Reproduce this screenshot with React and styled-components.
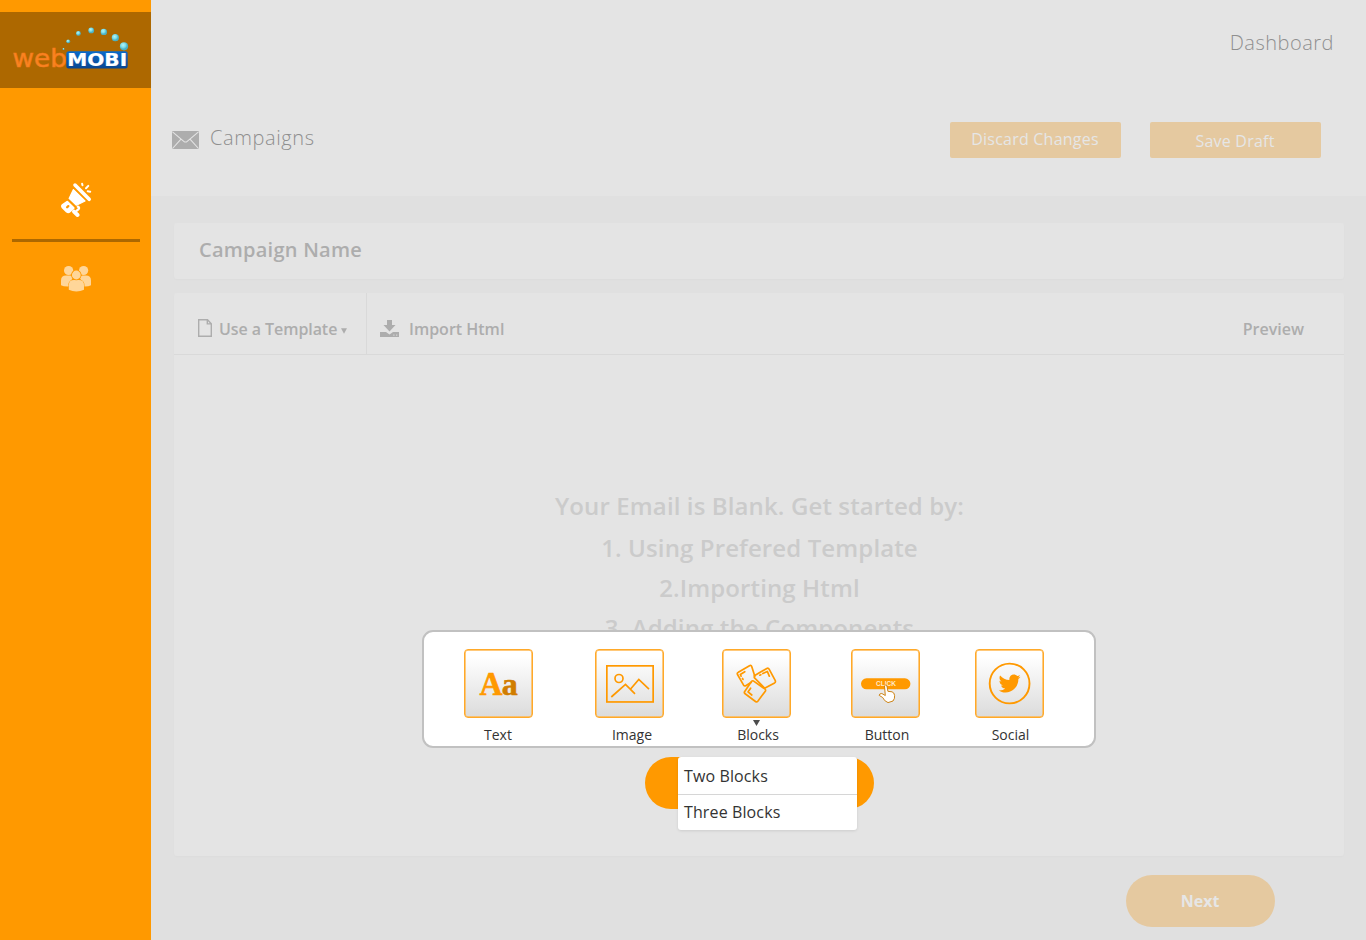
import React from "react";
import styled, { createGlobalStyle } from "styled-components";
import { FaTwitter } from "react-icons/fa";

const Global = createGlobalStyle`
  * { box-sizing: border-box; }
  body { margin: 0; font-family: "Open Sans", "Liberation Sans", sans-serif; background: #e0e0e0; overflow: hidden; }
  button { font: inherit; border: 0; padding: 0; cursor: pointer; }
  svg { display: block; flex: none; }
`;

const Page = styled.div`
  display: flex;
  position: relative;
  width: 1366px;
  height: 940px;
  overflow: hidden;
`;

const Sidebar = styled.aside`
  width: 151px;
  flex: none;
  padding-top: 12px;
  background: #ff9900;
  display: flex;
  flex-direction: column;
  align-items: center;
`;

const LogoBox = styled.div`
  width: 151px;
  height: 76px;
  background: #ad6800;
`;

const SideItem = styled.a`
  display: flex;
  width: 128px;
  justify-content: center;
  padding: ${(p) => p.$pad};
  border-bottom: ${(p) => (p.$active ? "3px solid #ad6800" : "0")};
`;

const Main = styled.main`
  flex: 1;
  display: flex;
  flex-direction: column;
  background: #e0e0e0;
`;

const Header = styled.header`
  height: 196px;
  background: #e4e4e4;
`;

const TopNav = styled.nav`
  height: 84px;
  display: flex;
  align-items: center;
  justify-content: flex-end;
  padding-right: 32px;
  font-size: 20px;
  font-weight: 300;
  letter-spacing: 0.5px;
  color: #8f8f8f;
`;

const TitleRow = styled.div`
  display: flex;
  align-items: flex-start;
  margin-top: 38px;
  padding: 0 45px 0 21px;
  height: 36px;
`;

const Title = styled.h1`
  margin: 2px auto 0 11px;
  font-size: 20px;
  line-height: 28px;
  font-weight: 300;
  letter-spacing: 0.6px;
  color: #8f8f8f;
`;

const ActionButton = styled.button`
  width: 171px;
  height: 36px;
  margin-left: ${(p) => p.$gap || 0}px;
  padding: ${(p) => p.$drop || 0}px 1px ${(p) => p.$lift || 0}px 0;
  border-radius: 2px;
  background: #e5c9a0;
  color: #e6e6e6;
  font-size: 16px;
  letter-spacing: 0.22px;
`;

const Content = styled.section`
  padding: 27px 22px 0 23px;
  display: flex;
  flex-direction: column;
`;

const Card = styled.div`
  background: #e4e4e4;
  border-radius: 3px;
  box-shadow: 0 1px 2px rgba(0, 0, 0, 0.02);
`;

const NameCard = styled(Card)`
  height: 56px;
  padding-left: 25px;
  line-height: 54px;
  font-size: 20px;
  font-weight: 600;
  letter-spacing: 0.24px;
  color: #adadad;
`;

const EditorCard = styled(Card)`
  height: 563px;
  margin-top: 14px;
`;

const EditorBar = styled.div`
  display: flex;
  height: 62px;
  border-bottom: 1px solid #d9d9d9;
  font-size: 16px;
  font-weight: 600;
  line-height: 22px;
  color: #adadad;
`;

const BarItem = styled.div`
  display: flex;
  align-items: flex-start;
  padding: 25px 0 0 ${(p) => p.$left || 0}px;
  width: ${(p) => p.$width || "auto"};
  border-right: ${(p) => (p.$divided ? "1px solid #d9d9d9" : "0")};
  margin-left: ${(p) => (p.$end ? "auto" : "0")};
  margin-right: ${(p) => (p.$end ? "40px" : "0")};
`;

const BarLabel = styled.span`
  margin-left: ${(p) => p.$gap || 0}px;
  letter-spacing: ${(p) => p.$track || 0}px;
  white-space: nowrap;
`;

const EmptyState = styled.div`
  display: flex;
  flex-direction: column;
  align-items: center;
  padding: 131px 0 0 1px;
  font-size: 24px;
  font-weight: 600;
  line-height: 40px;
  letter-spacing: 0.12px;
  color: #cbcbcb;
`;

const EmptyTitle = styled.div`
  margin-bottom: 2px;
`;

const Pill = styled.button`
  border-radius: 26px;
  height: 52px;
`;

const AddPill = styled(Pill)`
  width: 229px;
  margin-top: 109px;
  background: #ff9900;
`;

const NextPill = styled(Pill)`
  width: 149px;
  margin: 19px 69px 0 auto;
  padding-right: 1px;
  background: #e5c9a0;
  color: #e6e6e6;
  font-size: 16px;
  font-weight: 700;
`;

const Palette = styled.div`
  position: absolute;
  left: 422px;
  top: 630px;
  width: 674px;
  height: 118px;
  display: flex;
  padding: 17px 0 0 40px;
  background: #fff;
  border: 2px solid #c1c1c1;
  border-radius: 11px;
`;

const Tool = styled.div`
  width: 69px;
  margin-right: ${(p) => p.$after || 0}px;
  display: flex;
  flex-direction: column;
  align-items: center;
`;

const Tile = styled.div`
  width: 69px;
  height: 69px;
  border: 1px solid #ffa929;
  border-radius: 4px;
  background: linear-gradient(#ffffff 10%, #dbdbdb);
  box-shadow: inset 0 0 0 0.7px #ffb74d;
  display: flex;
  align-items: center;
  justify-content: center;
`;

const Caret = styled.div`
  height: 10px;
  padding-top: 2px;
`;

const ToolLabel = styled.span`
  font-size: 14px;
  line-height: 14px;
  color: #333;
  padding-left: ${(p) => p.$shift || 0}px;
  padding-right: ${(p) => p.$back || 0}px;
`;

const Menu = styled.ul`
  position: absolute;
  left: 678px;
  top: 757px;
  width: 179px;
  height: 73px;
  margin: 0;
  padding: 0;
  list-style: none;
  background: #fff;
  border-radius: 3px;
  box-shadow: 0 1px 3px rgba(0, 0, 0, 0.1);
`;

const MenuItem = styled.li`
  height: ${(p) => p.$h}px;
  padding-left: 6px;
  font-size: 16px;
  line-height: ${(p) => p.$lh}px;
  letter-spacing: 0.12px;
  color: #333;
  border-bottom: ${(p) => (p.$line ? "1px solid #d6d6d6" : "0")};
`;

function Logo() {
  const dots = [
    [63.5, 49, 1], [68.2, 41.3, 1.9], [78.4, 33.4, 2.4], [91.2, 30.4, 2.9],
    [103.8, 31.9, 3.2], [115.3, 37.7, 3.6], [124, 46.3, 4.1],
  ];
  return (
    <svg width="151" height="76" viewBox="0 12 151 76">
      <defs>
        <radialGradient id="dot" cx="40%" cy="35%">
          <stop offset="0" stopColor="#b6f4f5" />
          <stop offset="0.6" stopColor="#7cdde8" />
          <stop offset="1" stopColor="#4cb2c4" />
        </radialGradient>
        <linearGradient id="plate" x2="0" y2="1">
          <stop offset="0" stopColor="#0a6bcc" />
          <stop offset="1" stopColor="#0a4690" />
        </linearGradient>
      </defs>
      {dots.map(([x, y, r]) => (
        <circle key={x} cx={x} cy={y} r={r} fill="url(#dot)" />
      ))}
      <text x="12.5" y="66.5" fontFamily="DejaVu Sans" fontSize="25" textLength="54.5" lengthAdjust="spacingAndGlyphs" fill="#fb8420" stroke="#f47a1c" strokeWidth="0.6">web</text>
      <rect x="66.3" y="51.3" width="61.4" height="17.2" rx="2.5" fill="url(#plate)" />
      <text x="67.2" y="66.4" fontFamily="DejaVu Sans" fontWeight="700" fontSize="17.4" textLength="60" lengthAdjust="spacingAndGlyphs" fill="#fff" stroke="#fff" strokeWidth="0.2">MOBI</text>
    </svg>
  );
}

function Megaphone() {
  return (
    <svg width="32" height="36" viewBox="0 0 32 36" fill="none" stroke="#fff" strokeLinecap="round" strokeLinejoin="round">
      <path d="M15 3.1L29.2 17.3" strokeWidth="3.6" />
      <path d="M13.4 7.6L25 19L16.4 23.2L9.1 16.4Z" fill="#fff" strokeWidth="1.2" />
      <path d="M7.2 19.8L13.6 26L9.8 29.6Q8.2 31 6.6 29.6L2.6 25.6Q1.4 24.200 2.800 22.800Z" fill="#fff" strokeWidth="2" />
      <path d="M7.1 25.3L8.3 24.1" stroke="#ff9900" strokeWidth="2.300" />
      <path d="M14 29.6L17.600 33" strokeWidth="4" />
      <path d="M16.500 28.900L18.600 27.200Q19.800 25.400 17.800 24.600" strokeWidth="2.300" />
      <path d="M22.100 1.800L22.500 3.300M26 6.300L28.300 3.900M27.700 9.300L30.200 9.700" strokeWidth="2" />
    </svg>
  );
}

function People() {
  return (
    <svg width="32" height="27" viewBox="0 0 32 27" fill="#ffd699">
      <circle cx="8.6" cy="5.5" r="4.6" />
      <circle cx="23.6" cy="5.5" r="4.6" />
      <path d="M1 20.2V15.5Q1 10.6 6 10.6H10Q12 10.6 13 12.5L9 19V21.4Q3.500 21.600 1 20.200Z" />
      <path d="M31 20.200V15.500Q31 10.600 26 10.600H22.500Q20.500 10.600 19.500 12.500L23.500 19V21.400Q28.500 21.600 31 20.200Z" />
      <path d="M8.800 24.800V20.300Q8.800 15 14 15H18.800Q24 15 24 20.300V24.800Q20.500 26.400 16.400 26.400T8.800 24.800Z" stroke="#ff9900" strokeWidth="1" paintOrder="stroke" />
      <circle cx="16.300" cy="10" r="4.400" stroke="#ff9900" strokeWidth="1.600" paintOrder="stroke" />
    </svg>
  );
}

const EnvelopeSvg = styled.svg`
  margin-top: 9px;
`;

function Envelope() {
  return (
    <EnvelopeSvg width="27" height="18" viewBox="0 0 27 18">
      <rect width="27" height="18" rx="1" fill="#adadad" />
      <path d="M0.500 0.800L11.800 10.300Q13.500 11.800 15.200 10.300L26.500 0.800M0.500 17.500L9 8.200M26.500 17.500L18 8.200" fill="none" stroke="#e4e4e4" strokeWidth="1.100" />
    </EnvelopeSvg>
  );
}

const BarIcon = styled.svg`
  margin: ${(p) => p.$m};
`;

function PageIcon() {
  return (
    <BarIcon $m="1px 0 0" width="14" height="18" viewBox="0 0 14 18" fill="none" stroke="#adadad" strokeWidth="1.400">
      <path d="M0.700 0.700H9.500L13.300 4.700V17.300H0.700ZM9.300 0.900V4.900H13.200" />
    </BarIcon>
  );
}

function ImportIcon() {
  return (
    <BarIcon $m="2px 0 0" width="19" height="17" viewBox="0 0 19 17">
      <path d="M7 0H12V5H15.500L9.500 11.500L3.500 5H7Z" fill="#adadad" />
      <path d="M0 12H6L9.500 14.500L13 12H19V17H0Z" fill="#adadad" />
      <path d="M13.200 14.500H14.500V15.700H13.200ZM16 14.500H17.300V15.700H16Z" fill="#d4d4d4" />
    </BarIcon>
  );
}

function TextIcon() {
  return (
    <svg width="67" height="67" viewBox="0 0 67 67" fontFamily="Liberation Serif" fontWeight="700">
      <text x="14.500" y="45.200" fontSize="34" textLength="23" lengthAdjust="spacingAndGlyphs" fill="#ff9900" stroke="#ff9900" strokeWidth="0.600">A</text>
      <text x="36.800" y="45.200" fontSize="32" textLength="16" lengthAdjust="spacingAndGlyphs" fill="#d17d00" stroke="#d17d00" strokeWidth="0.600">a</text>
    </svg>
  );
}

function ImageIcon() {
  return (
    <svg width="48" height="38" viewBox="0 0 48 38" fill="none" stroke="#ff9900" strokeWidth="1.700">
      <rect x="0.850" y="0.850" width="46.300" height="36.100" />
      <circle cx="13" cy="13.500" r="4" />
      <path d="M5.300 32L19.500 19.300L29 28.800M24.600 24L32.800 14.500L43 24.200" />
    </svg>
  );
}

function BlocksIcon() {
  return (
    <svg width="42" height="40" viewBox="0.700 0.300 42 40" fill="none" stroke="#ff9900" strokeWidth="1.700" strokeLinejoin="round" strokeLinecap="round">
      <path d="M19.500 12.500L16.500 3Q15.800 1.200 14.200 2L3 8.500Q1.500 9.300 2.200 10.800L8.300 21.500Q9.200 22.700 10.500 22L16 18.500" />
      <path d="M5.800 12.500L5 10.800L9.500 8M7.200 14.800L7.700 15.700" />
      <path d="M19 12L31.500 4.700Q33 4 33.800 5.500L40 17Q40.500 18.300 39.300 19.200L29.300 24.500L19 14Z" />
      <path d="M27.500 9.800L32 7.700L34 12.500M24.500 11.500L25.500 11" />
      <path d="M18 17.200L29.500 25.200Q30.800 26.200 30 27.500L22.500 37.500Q21.500 38.700 20.200 37.800L9.800 30Q8.500 29 9.400 27.700L16 18Q17 16.700 18 17.200Z" />
      <path d="M15.300 24.500L12.700 28.200L16.500 31.300" />
    </svg>
  );
}

const ClickSvg = styled.svg`
  margin-top: 14px;
`;

function ClickIcon() {
  return (
    <ClickSvg width="50" height="28" viewBox="0 0 50 28">
      <rect x="0" y="1.300" width="49.400" height="11" rx="5.500" fill="#ff9900" />
      <text x="15" y="9.200" fontSize="6.500" fontFamily="Liberation Sans" fontWeight="700" fill="#ffe9c9" textLength="20" lengthAdjust="spacingAndGlyphs">CLICK</text>
      <path d="M23.500 9Q24.500 7.200 26 9L26.900 14.300L31 14.800Q33.300 15.500 33.600 18.500Q34 21.500 32 24L27 25.600Q23 24 21.700 20.500L18.200 18.400Q18.300 16.400 20.800 16.500L24.300 18.500Z" fill="#fff" stroke="#c87800" strokeWidth="0.900" strokeLinejoin="round" />
    </ClickSvg>
  );
}

function SocialIcon() {
  return (
    <svg width="42" height="42" viewBox="0.400 0.500 42 42" overflow="visible">
      <circle cx="21" cy="21" r="19.900" fill="none" stroke="#ff9900" strokeWidth="1.900" />
      <FaTwitter x="10" y="10" size={22} color="#ff9900" />
    </svg>
  );
}

const tools = [
  { label: "Text", icon: <TextIcon />, after: 62, back: 1 },
  { label: "Image", icon: <ImageIcon />, after: 58, shift: 5 },
  { label: "Blocks", icon: <BlocksIcon />, after: 60, shift: 3, caret: true },
  { label: "Button", icon: <ClickIcon />, after: 55, shift: 3 },
  { label: "Social", icon: <SocialIcon />, after: 0, shift: 2 },
];

export default function App() {
  return (
    <Page>
      <Global />
      <Sidebar>
        <LogoBox><Logo /></LogoBox>
        <SideItem $active $pad="94px 0 21px"><Megaphone /></SideItem>
        <SideItem $pad="23px 0 0"><People /></SideItem>
      </Sidebar>
      <Main>
        <Header>
          <TopNav>Dashboard</TopNav>
          <TitleRow>
            <Envelope />
            <Title>Campaigns</Title>
            <ActionButton $lift={2}>Discard Changes</ActionButton>
            <ActionButton $gap={29} $drop={2}>Save Draft</ActionButton>
          </TitleRow>
        </Header>
        <Content>
          <NameCard>Campaign Name</NameCard>
          <EditorCard>
            <EditorBar>
              <BarItem $left={24} $width="193px" $divided>
                <PageIcon />
                <BarLabel $gap={7} $track={-0.07}>Use a Template</BarLabel>
                <BarIcon $m="10px 0 0 4px" width="6" height="6" viewBox="0 0 6 6">
                  <path d="M0 0.300H6L3 5.700Z" fill="#adadad" />
                </BarIcon>
              </BarItem>
              <BarItem $left={13}>
                <ImportIcon />
                <BarLabel $gap={10}>Import Html</BarLabel>
              </BarItem>
              <BarItem $end>Preview</BarItem>
            </EditorBar>
            <EmptyState>
              <EmptyTitle>Your Email is Blank. Get started by:</EmptyTitle>
              <div>1. Using Prefered Template</div>
              <div>2.Importing Html</div>
              <div>3. Adding the Components</div>
              <AddPill aria-label="Add" />
            </EmptyState>
          </EditorCard>
          <NextPill>Next</NextPill>
        </Content>
      </Main>
      <Palette>
        {tools.map((t) => (
          <Tool key={t.label} $after={t.after}>
            <Tile>{t.icon}</Tile>
            <Caret>
              {t.caret && (
                <svg width="7" height="6" viewBox="0 0 7 6"><path d="M0 0H7L3.500 6Z" fill="#4d4d4d" /></svg>
              )}
            </Caret>
            <ToolLabel $shift={t.shift} $back={t.back}>{t.label}</ToolLabel>
          </Tool>
        ))}
      </Palette>
      <Menu>
        <MenuItem $h={38} $lh={38} $line>Two Blocks</MenuItem>
        <MenuItem $h={35} $lh={34}>Three Blocks</MenuItem>
      </Menu>
    </Page>
  );
}
